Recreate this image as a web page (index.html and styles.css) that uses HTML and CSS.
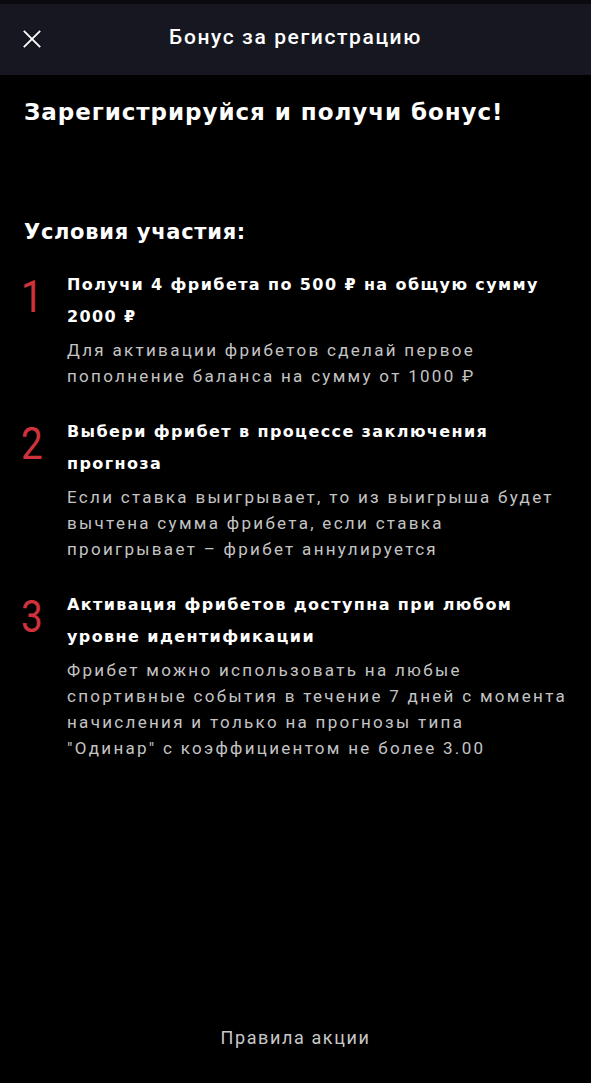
FILE: index.html
```html
<!DOCTYPE html>
<html lang="ru">
<head>
<meta charset="utf-8">
<link rel="stylesheet" href="styles.css">
</head>
<body>
<div class="page">
  <header class="header">
    <button class="close" aria-label="Закрыть">
      <svg width="22" height="22" viewBox="0 0 22 22"><path d="M2 2 L20 20 M20 2 L2 20" stroke="#fff" stroke-width="2" fill="none"/></svg>
    </button>
    <div class="header-title">Бонус за регистрацию</div>
  </header>
  <main class="content">
    <h1 class="title">Зарегистрируйся и получи бонус!</h1>
    <h2 class="subtitle">Условия участия:</h2>
    <ol class="steps">
      <li class="step">
        <div class="num">1</div>
        <div class="step-body">
          <div class="step-head">Получи 4 фрибета по 500 ₽ на общую сумму 2000 ₽</div>
          <div class="step-text">Для активации фрибетов сделай первое пополнение баланса на сумму от 1000 ₽</div>
        </div>
      </li>
      <li class="step">
        <div class="num">2</div>
        <div class="step-body">
          <div class="step-head">Выбери фрибет в процессе заключения прогноза</div>
          <div class="step-text">Если ставка выигрывает, то из выигрыша будет вычтена сумма фрибета, если ставка проигрывает – фрибет аннулируется</div>
        </div>
      </li>
      <li class="step">
        <div class="num">3</div>
        <div class="step-body">
          <div class="step-head">Активация фрибетов доступна при любом уровне идентификации</div>
          <div class="step-text">Фрибет можно использовать на любые спортивные события в течение 7 дней с момента начисления и только на прогнозы типа<br>"Одинар" с коэффициентом не более 3.00</div>
        </div>
      </li>
    </ol>
  </main>
  <footer class="footer">
    <a class="rules">Правила акции</a>
  </footer>
</div>
</body>
</html>
```
FILE: styles.css
```css
* { box-sizing: border-box; }
html, body { margin: 0; padding: 0; background: #000; }
body { font-family: Roboto, "Noto Sans", sans-serif; color: #fff; }
.page { width: 591px; height: 1083px; display: flex; flex-direction: column; background: #000; }
.header {
  height: 75px; background: #161720; border-top: 4px solid #0b0b0f;
  display: flex; align-items: center; position: relative; justify-content: center;
}
.close {
  position: absolute; left: 22px; top: 25px; background: none; border: 0; padding: 0; width: 20px; height: 20px; cursor: pointer;
}
.close svg { display: block; width: 20px; height: 20px; }
.header-title { font-size: 21px; font-weight: 500; color: #fff; letter-spacing: 1.6px; margin-top: -6px; }
.content { padding: 0 16px 0 24px; flex: 1; }
.title { margin: 22px 0 0; font-family: "DejaVu Sans", sans-serif; font-size: 23px; line-height: 30px; font-weight: 700; letter-spacing: 0.95px; }
.subtitle { margin: 91px 0 0; font-family: "DejaVu Sans", sans-serif; font-size: 21px; line-height: 28px; font-weight: 700; letter-spacing: 0.7px; }
.steps { list-style: none; margin: 23px 0 0; padding: 0; display: flex; flex-direction: column; gap: 27px; }
.step { display: flex; }
.num { width: 46px; flex: none; color: #d0323c; font-size: 44px; font-weight: 400; line-height: 32px; padding-top: 12px; margin-left: -3px; transform: scaleX(0.88); transform-origin: left top; }
.step-body { flex: 1; min-width: 0; }
.step-head { font-family: "DejaVu Sans", sans-serif; font-size: 16px; line-height: 32px; font-weight: 700; letter-spacing: 1.4px; padding-right: 8px; }
.step-text { font-size: 17px; line-height: 26px; color: #c4c4c4; letter-spacing: 2.3px; margin-top: 4px; }
.footer { height: 90px; display: flex; justify-content: center; padding-top: 34px; }
.rules { font-size: 18px; color: #c8c8c8; letter-spacing: 1.6px; }
```
